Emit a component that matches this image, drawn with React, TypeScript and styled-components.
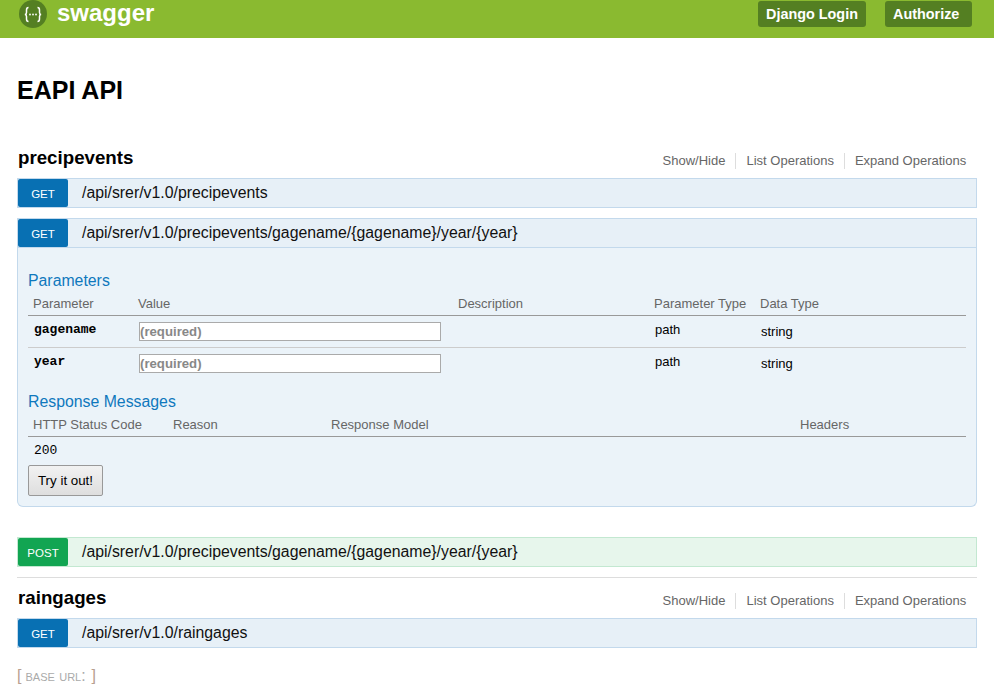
import React from "react";
import styled, { createGlobalStyle } from "styled-components";

const GlobalStyle = createGlobalStyle`
  html, body {
    margin: 0;
    padding: 0;
    background: #fff;
    font-family: "Liberation Sans", Arial, sans-serif;
    color: #000;
  }
`;

const Header = styled.header`
  height: 38px;
  background: #8aba30;
  display: flex;
  align-items: flex-start;
  justify-content: space-between;
  padding: 0 22px 0 19px;
  box-sizing: border-box;
`;

const Brand = styled.div`
  display: flex;
  align-items: center;
  height: 28px;
  gap: 10px;
`;

const Logo = styled.svg`
  width: 28px;
  height: 28px;
  display: block;
`;

const BrandName = styled.span`
  color: #fff;
  font-size: 24px;
  font-weight: bold;
  line-height: 26px;
  position: relative;
  top: -1px;
`;

const HeaderActions = styled.div`
  display: flex;
  gap: 19px;
  padding-top: 1px;
`;

const HeaderButton = styled.a`
  height: 26px;
  line-height: 27px;
  padding: 0 8px;
  background: #547f22;
  border-radius: 3px;
  color: #fff;
  font-size: 14.4px;
  font-weight: bold;
  width: ${(p: { $width: number }) => p.$width}px;
  box-sizing: border-box;
`;

const Main = styled.main`
  padding: 0 17px;
`;

const Title = styled.h1`
  margin: 0;
  padding-top: 37px;
  font-size: 25px;
  line-height: 30px;
  font-weight: bold;
`;

const ResourceHead = styled.div`
  display: flex;
  justify-content: space-between;
  align-items: flex-end;
  height: 27px;
  padding-left: 1px;
  margin-bottom: 7px;
`;

const ResourceName = styled.h2`
  margin: 0;
  font-size: 18.72px;
  line-height: 26px;
  font-weight: bold;
`;

const Links = styled.ul`
  display: flex;
  list-style: none;
  margin: 0 0.8px 2px 0;
  padding: 0;
`;

const LinkItem = styled.li`
  font-size: 13px;
  line-height: 16px;
  color: #666;
  padding: 0 10px;
  & + & {
    border-left: 1px solid #ddd;
  }
`;

const Bar = styled.div<{ $post?: boolean }>`
  height: 30px;
  box-sizing: border-box;
  display: flex;
  align-items: center;
  gap: 14px;
  background: ${(p) => (p.$post ? "#e7f6ec" : "#e7f0f7")};
  border: 1px solid ${(p) => (p.$post ? "#c3e8d1" : "#c3d9ec")};
`;

const Method = styled.span<{ $post?: boolean }>`
  width: 50px;
  height: 28px;
  line-height: 31px;
  text-align: center;
  flex-shrink: 0;
  border-radius: 2px;
  color: #fff;
  font-size: 11.5px;
  background: ${(p) => (p.$post ? "#12a552" : "#0870b3")};
`;

const Path = styled.span`
  font-size: 15.84px;
  color: #111;
`;

const Operation = styled.div`
  margin-top: 10px;
`;

const Panel = styled.div`
  background: #ebf3f9;
  border: 1px solid #c3d9ec;
  border-top: none;
  border-radius: 0 0 6px 6px;
  height: 259px;
  box-sizing: border-box;
  padding: 23px 10px 0;
`;

const SectionTitle = styled.h4`
  margin: 0;
  font-size: 15.84px;
  line-height: 19px;
  font-weight: normal;
  color: #0f78bd;
`;

const Table = styled.table`
  width: 100%;
  border-collapse: collapse;
  table-layout: fixed;
`;

const Th = styled.th<{ $width?: number }>`
  width: ${(p) => (p.$width ? `${p.$width}px` : "auto")};
  text-align: left;
  font-weight: normal;
  font-size: 13px;
  line-height: 15px;
  color: #666;
  padding: 6px 5px 4px;
  border-bottom: 1px solid #999;
`;

const Td = styled.td`
  font-size: 13px;
  line-height: 15px;
  padding: 0 5px;
  height: 31px;
  vertical-align: middle;
  color: #000;
`;

const Row = styled.tr`
  &:first-child td {
    border-bottom: 1px solid #ccc;
  }
`;

const ParamName = styled.code`
  font-family: "Liberation Mono", monospace;
  font-size: 13px;
  font-weight: bold;
  position: relative;
  top: -3px;
  left: 1px;
`;

const ValueInput = styled.input`
  display: block;
  width: 302px;
  height: 19px;
  box-sizing: border-box;
  padding: 0;
  margin: 0 0 0 1px;
  border: 1px solid #aaa;
  background: #fff;
  font-family: "Liberation Sans", sans-serif;
  font-size: 13.2px;
  font-weight: bold;
  &::placeholder {
    color: #888;
    opacity: 1;
  }
`;

const TypeText = styled.span<{ $up?: boolean }>`
  display: block;
  position: relative;
  left: 1px;
  top: ${(p) => (p.$up ? "-2px" : "0")};
`;

const ResponseSection = styled.div`
  margin-top: 13px;
`;

const StatusCell = styled.td`
  font-family: "Liberation Mono", monospace;
  font-size: 13px;
  line-height: 15px;
  padding: 6px 6px 7px;
`;

const TryButton = styled.button`
  display: block;
  width: 75px;
  height: 31px;
  padding: 0;
  font-family: "Liberation Sans", sans-serif;
  font-size: 13.33px;
  color: #000;
  border: 1px solid #999;
  border-radius: 2px;
  background: linear-gradient(#f2f2f2, #dedede);
`;

const Divider = styled.hr`
  border: none;
  border-top: 1px solid #ddd;
  margin: 10px 0 0;
`;

const BaseUrl = styled.div`
  margin-top: 19px;
  font-size: 16px;
  line-height: 18px;
  color: #aaa;
  & > b {
    font-weight: normal;
    color: #b8a090;
  }
  & > span {
    font-variant: small-caps;
    font-size: 15.84px;
    margin: 0 6px 0 4px;
  }
`;

const Spacer = styled.div<{ $h: number }>`
  height: ${(p) => p.$h}px;
`;

const LinksList = () => (
  <Links>
    <LinkItem>Show/Hide</LinkItem>
    <LinkItem>List Operations</LinkItem>
    <LinkItem>Expand Operations</LinkItem>
  </Links>
);

const gagePath = "/api/srer/v1.0/precipevents/gagename/{gagename}/year/{year}";

export default function App() {
  return (
    <>
      <GlobalStyle />
      <Header>
        <Brand>
          <Logo viewBox="0 0 28 28">
            <circle cx="14" cy="14" r="14" fill="#547f22" />
            <g fill="none" stroke="#fff" strokeWidth="1.5">
              <path d="M9.5 7.5C7.6 7.5 7.5 8.4 7.5 10v2.5c0 1.2-.6 1.9-1.6 2 1 .1 1.6.8 1.6 2V19c0 1.6.1 2.5 2 2.5" />
              <path d="M18.5 7.5c1.9 0 2 .9 2 2.5v2.5c0 1.2.6 1.9 1.6 2-1 .1-1.6.8-1.6 2V19c0 1.6-.1 2.5-2 2.5" />
            </g>
            <g fill="#fff">
              <circle cx="11" cy="14.5" r="0.9" />
              <circle cx="14" cy="14.5" r="0.9" />
              <circle cx="17" cy="14.5" r="0.9" />
            </g>
          </Logo>
          <BrandName>swagger</BrandName>
        </Brand>
        <HeaderActions>
          <HeaderButton $width={108}>Django Login</HeaderButton>
          <HeaderButton $width={87}>Authorize</HeaderButton>
        </HeaderActions>
      </Header>
      <Main>
        <Title>EAPI API</Title>
        <Spacer $h={39} />
        <ResourceHead>
          <ResourceName>precipevents</ResourceName>
          <LinksList />
        </ResourceHead>
        <Bar>
          <Method>GET</Method>
          <Path>/api/srer/v1.0/precipevents</Path>
        </Bar>
        <Operation>
          <Bar>
            <Method>GET</Method>
            <Path>{gagePath}</Path>
          </Bar>
          <Panel>
            <SectionTitle>Parameters</SectionTitle>
            <Table>
              <thead>
                <tr>
                  <Th $width={95}>Parameter</Th>
                  <Th $width={310}>Value</Th>
                  <Th $width={186}>Description</Th>
                  <Th $width={96}>Parameter Type</Th>
                  <Th>Data Type</Th>
                </tr>
              </thead>
              <tbody>
                {["gagename", "year"].map((name) => (
                  <Row key={name}>
                    <Td>
                      <ParamName>{name}</ParamName>
                    </Td>
                    <Td>
                      <ValueInput placeholder="(required)" />
                    </Td>
                    <Td />
                    <Td>
                      <TypeText $up>path</TypeText>
                    </Td>
                    <Td>
                      <TypeText>string</TypeText>
                    </Td>
                  </Row>
                ))}
              </tbody>
            </Table>
            <ResponseSection>
              <SectionTitle>Response Messages</SectionTitle>
              <Table>
                <thead>
                  <tr>
                    <Th $width={130}>HTTP Status Code</Th>
                    <Th $width={148}>Reason</Th>
                    <Th $width={459}>Response Model</Th>
                    <Th>Headers</Th>
                  </tr>
                </thead>
                <tbody>
                  <tr>
                    <StatusCell>200</StatusCell>
                  </tr>
                </tbody>
              </Table>
              <TryButton>Try it out!</TryButton>
            </ResponseSection>
          </Panel>
        </Operation>
        <Spacer $h={30} />
        <Bar $post>
          <Method $post>POST</Method>
          <Path>{gagePath}</Path>
        </Bar>
        <Divider />
        <Spacer $h={6} />
        <ResourceHead>
          <ResourceName>raingages</ResourceName>
          <LinksList />
        </ResourceHead>
        <Bar>
          <Method>GET</Method>
          <Path>/api/srer/v1.0/raingages</Path>
        </Bar>
        <BaseUrl>
          <b>[</b>
          <span>base url:</span>
          <b>]</b>
        </BaseUrl>
      </Main>
    </>
  );
}
